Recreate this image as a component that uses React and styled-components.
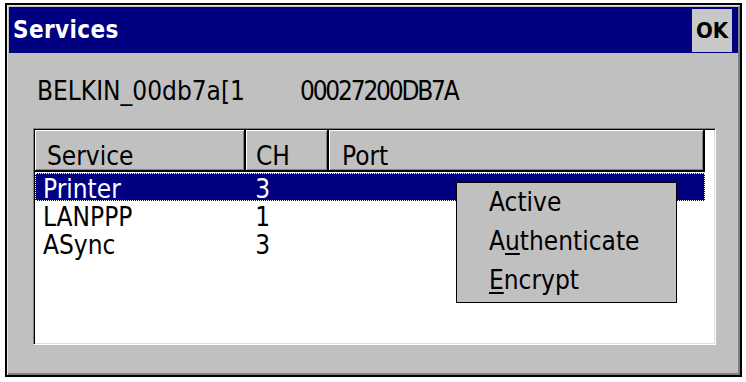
import React from 'react'
import styled, { createGlobalStyle } from 'styled-components'

const GlobalStyle = createGlobalStyle`
  html, body {
    margin: 0;
    padding: 0;
    background: #ffffff;
  }
  body {
    font-family: "DejaVu Sans Condensed", "DejaVu Sans", sans-serif;
    color: #000;
  }
`

const columns = [
  { key: 'service', title: 'Service', width: 211, headPad: 12, cellPad: 7 },
  { key: 'ch', title: 'CH', width: 83, headPad: 10, cellPad: 9 },
  { key: 'port', title: 'Port', width: 376, headPad: 13, cellPad: 12 },
]

const rows = [
  { service: 'Printer', ch: '3', port: '', selected: true },
  { service: 'LANPPP', ch: '1', port: '' },
  { service: 'ASync', ch: '3', port: '' },
]

export default function App() {
  return (
    <Page>
      <GlobalStyle />
      <Window>
        <TitleBar>
          <Title>Services</Title>
          <OkButton>OK</OkButton>
        </TitleBar>
        <Body>
          <InfoRow>
            <DeviceName>BELKIN_00db7a[1</DeviceName>
            <MacAddress>00027200DB7A</MacAddress>
          </InfoRow>
          <ListBox>
            <HeaderRow>
              {columns.map(c => (
                <HeaderCell key={c.key} $width={c.width} $pad={c.headPad}>
                  {c.title}
                </HeaderCell>
              ))}
            </HeaderRow>
            <Rows>
              {rows.map(r => (
                <Row key={r.service} $selected={r.selected}>
                  {columns.map(c => (
                    <Cell key={c.key} $width={c.width} $pad={c.cellPad}>
                      {r[c.key]}
                    </Cell>
                  ))}
                </Row>
              ))}
            </Rows>
            <Menu>
              <MenuItem>Active</MenuItem>
              <MenuItem>A<u>u</u>thenticate</MenuItem>
              <MenuItem><u>E</u>ncrypt</MenuItem>
            </Menu>
          </ListBox>
        </Body>
      </Window>
    </Page>
  )
}

const Page = styled.div`
  padding: 3px 0 0 5px;
`

const Window = styled.div`
  width: 737px;
  height: 374px;
  box-sizing: border-box;
  border: 2px solid #000;
  padding: 2px;
  background: #c0c0c0;
  box-shadow: inset 1px 1px 0 #e8e8e8, inset -2px -2px 0 #808080;
  display: flex;
  flex-direction: column;
`

const TitleBar = styled.div`
  height: 46px;
  background: #000080;
  display: flex;
  align-items: center;
  justify-content: space-between;
  padding-left: 4px;
`

const Title = styled.div`
  color: #fff;
  font-weight: bold;
  font-size: 24px;
  letter-spacing: 0.4px;
`

const OkButton = styled.div`
  width: 40px;
  height: 43px;
  margin-right: 6px;
  background: #c8c8c8;
  display: flex;
  align-items: center;
  justify-content: center;
  font-weight: bold;
  font-size: 22px;
  color: #000;
`

const Body = styled.div`
  flex: 1;
  padding: 24px 22px 0 24px;
`

const InfoRow = styled.div`
  display: flex;
  padding-left: 4px;
  font-size: 26px;
  line-height: 28px;
`

const DeviceName = styled.span`
  width: 263px;
`

const MacAddress = styled.span`
  letter-spacing: -2.2px;
`

const ListBox = styled.div`
  position: relative;
  margin-top: 23px;
  height: 217px;
  box-sizing: border-box;
  background: #fff;
  border-top: 1px solid #808080;
  border-left: 1px solid #808080;
  border-right: 1px solid #fff;
  border-bottom: 1px solid #fff;
  padding: 1px;
  box-shadow: inset 1px 1px 0 #000, inset -1px -1px 0 #dfdfdf;
  font-size: 26px;
`

const HeaderRow = styled.div`
  display: flex;
`

const HeaderCell = styled.div`
  width: ${p => p.$width}px;
  height: 42px;
  box-sizing: border-box;
  background: #c0c0c0;
  border-right: 2px solid #000;
  border-bottom: 2px solid #000;
  box-shadow: inset 1px 1px 0 #fff, inset -1px -1px 0 #808080;
  padding: 13px 0 0 ${p => p.$pad}px;
  line-height: 26px;
`

const Rows = styled.div`
  padding-top: 1px;
`

const Row = styled.div`
  display: flex;
  width: 670px;
  height: 28px;
  box-sizing: border-box;
  border: 1px dotted ${p => (p.$selected ? '#fff' : 'transparent')};
  padding-top: 4px;
  line-height: 22px;
  background: ${p => (p.$selected ? '#000080' : 'transparent')};
  color: ${p => (p.$selected ? '#fff' : '#000')};
`

const Cell = styled.div`
  width: ${p => p.$width}px;
  box-sizing: border-box;
  padding-left: ${p => p.$pad}px;
  white-space: nowrap;
`

const Menu = styled.div`
  position: absolute;
  left: 422px;
  top: 53px;
  width: 221px;
  box-sizing: border-box;
  border: 1px solid #000;
  background: #c0c0c0;
  padding-bottom: 2px;
`

const MenuItem = styled.div`
  height: 39px;
  line-height: 39px;
  padding-left: 32px;
  font-size: 26px;

  & u {
    text-underline-offset: 3px;
  }
`
